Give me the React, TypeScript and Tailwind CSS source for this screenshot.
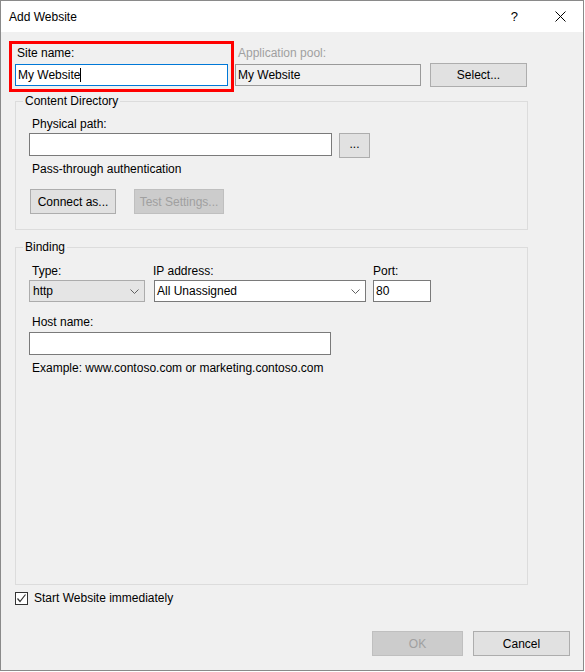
import React from "react";

const Chevron = () => (
  <svg width="9" height="5" viewBox="0 0 9 5" className="text-[#606060]">
    <path d="M0.5 0.5 L4.5 4.5 L8.5 0.5" fill="none" stroke="currentColor" strokeWidth="1" />
  </svg>
);

const Button = ({ label, w, disabled }: { label: string; w: string; disabled?: boolean }) => (
  <div
    className={`${w} h-[25px] flex items-center justify-center border ${
      disabled ? "bg-[#cccccc] border-[#bfbfbf] text-[#a0a0a0]" : "bg-[#e1e1e1] border-[#adadad] text-black"
    }`}
  >
    {label}
  </div>
);

export default function App() {
  return (
    <div className="w-[585px] h-[672px] bg-white font-['Segoe_UI','Liberation_Sans',sans-serif] text-[12px] leading-[16px] text-black">
      <div className="w-[584px] h-[671px] flex flex-col border border-[#8a8a8a]">
        {/* title bar */}
        <div className="h-[31px] bg-white flex items-center pl-[8px]">
          <span>Add Website</span>
          <span className="ml-auto mr-[37px] text-[13px]">?</span>
          <svg width="11" height="11" viewBox="0 0 11 11" className="mr-[17px]">
            <path d="M0.5 0.5 L10.5 10.5 M10.5 0.5 L0.5 10.5" stroke="#000" strokeWidth="1" />
          </svg>
        </div>

        {/* body */}
        <div className="flex-1 bg-[#f0f0f0] flex flex-col">
          {/* site name row */}
          <div className="flex items-start mt-[9px] ml-[8px]">
            <div className="w-[225px] h-[51px] border-[3px] border-[#ff0000] pt-[1px]">
              <div className="pl-[5px]">Site name:</div>
              <div className="mt-[3px] ml-[3px] w-[213px] h-[22px] bg-white border border-[#0078d7] flex items-center pl-[2px]">
                <span>My Website</span>
                <span className="w-px h-[14px] bg-black" />
              </div>
            </div>
            <div className="ml-[1px] pt-[4px]">
              <div className="pl-[3px] text-[#a0a0a0]">Application pool:</div>
              <div className="mt-[3px] w-[186px] h-[22px] bg-[#f0f0f0] border border-[#9a9a9a] flex items-center pl-[2px]">
                My Website
              </div>
            </div>
            <div className="ml-[9px] mt-[22px] w-[97px] h-[24px] flex items-center justify-center bg-[#e1e1e1] border border-[#adadad]">
              Select...
            </div>
          </div>

          {/* content directory */}
          <fieldset className="mt-[1px] ml-[14px] w-[513px] border border-[#dcdcdc] pl-[13px] pb-[15px]">
            <legend className="-ml-[6px] px-[2px]">Content Directory</legend>
            <div className="mt-[7px] pl-[3px]">Physical path:</div>
            <div className="flex items-start mt-[1px]">
              <div className="w-[303px] h-[23px] bg-white border border-[#7a7a7a]" />
              <div className="ml-[7px] w-[31px] h-[25px] flex items-center justify-center bg-[#e1e1e1] border border-[#adadad] pb-[3px]">
                ...
              </div>
            </div>
            <div className="mt-[3px] pl-[3px]">Pass-through authentication</div>
            <div className="flex mt-[12px] ml-[1px] gap-[18px]">
              <Button label="Connect as..." w="w-[86px]" />
              <Button label="Test Settings..." w="w-[90px]" disabled />
            </div>
          </fieldset>

          {/* binding */}
          <fieldset className="mt-[9px] ml-[14px] w-[513px] border border-[#dcdcdc] pl-[13px] pb-[208px]">
            <legend className="-ml-[6px] px-[2px]">Binding</legend>
            <div className="flex mt-[8px]">
              <div>
                <div className="pl-[3px]">Type:</div>
                <div className="mt-[1px] w-[116px] h-[22px] bg-[#e5e5e5] border border-[#acacac] flex items-center justify-between pl-[3px] pr-[5px]">
                  <span>http</span>
                  <Chevron />
                </div>
              </div>
              <div className="ml-[8px]">
                <div>IP address:</div>
                <div className="mt-[1px] ml-[1px] w-[212px] h-[22px] bg-white border border-[#7a7a7a] flex items-center justify-between pl-[2px] pr-[5px]">
                  <span>All Unassigned</span>
                  <Chevron />
                </div>
              </div>
              <div className="ml-[7px]">
                <div>Port:</div>
                <div className="mt-[1px] w-[58px] h-[22px] bg-white border border-[#7a7a7a] flex items-center pl-[2px]">
                  80
                </div>
              </div>
            </div>
            <div className="mt-[12px] pl-[3px]">Host name:</div>
            <div className="mt-[2px] w-[302px] h-[23px] bg-white border border-[#7a7a7a]" />
            <div className="mt-[5px] pl-[3px]">Example: www.contoso.com or marketing.contoso.com</div>
          </fieldset>

          {/* start checkbox */}
          <div className="flex items-center h-[16px] mt-[5px] ml-[14px]">
            <div className="w-[13px] h-[13px] bg-white border border-[#333333] flex items-center justify-center">
              <svg width="11" height="11" viewBox="0 0 11 11">
                <path d="M1.5 5.5 L4 8.5 L9.5 1.5" fill="none" stroke="#333333" strokeWidth="1.2" />
              </svg>
            </div>
            <span className="ml-[6px]">Start Website immediately</span>
          </div>

          {/* dialog buttons */}
          <div className="flex justify-end gap-[10px] mt-[25px] mr-[13px]">
            <Button label="OK" w="w-[91px]" disabled />
            <Button label="Cancel" w="w-[97px]" />
          </div>
        </div>
      </div>
    </div>
  );
}
